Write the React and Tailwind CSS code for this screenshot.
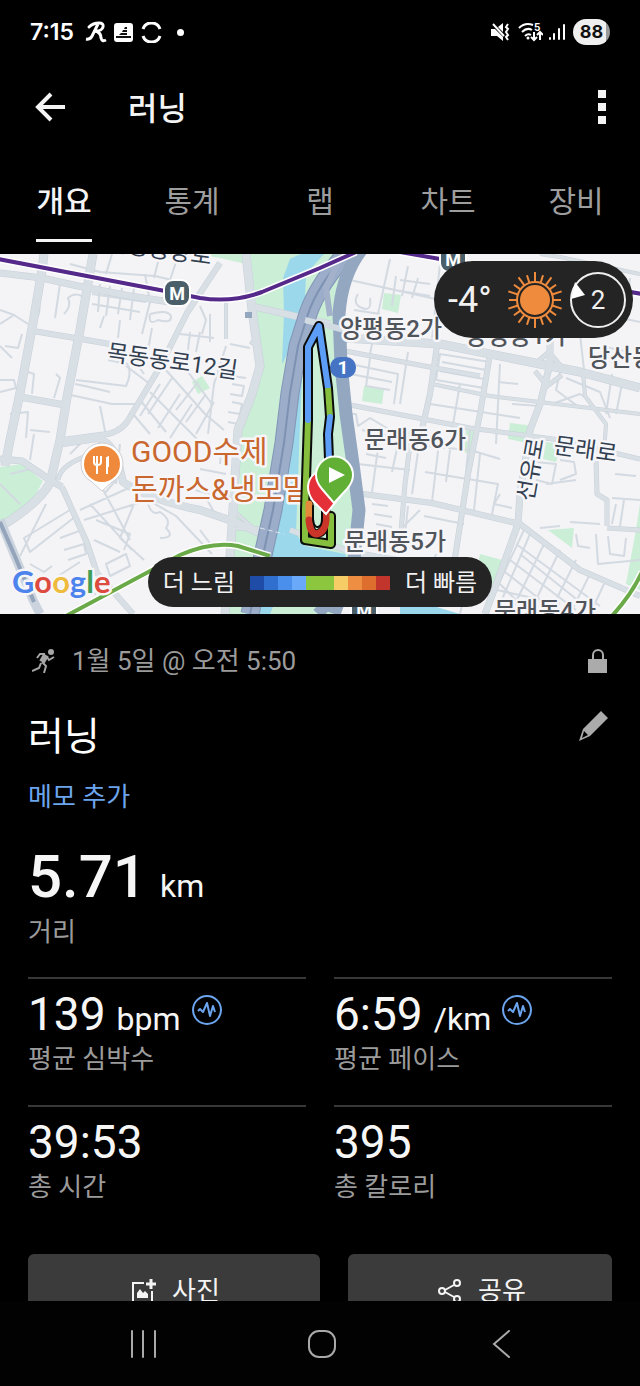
// App.jsx
const TABS = ['개요', '통계', '랩', '차트', '장비'];

const STATS = [
  { value: '139', unit: 'bpm', label: '평균 심박수', zone: true },
  { value: '6:59', unit: '/km', label: '평균 페이스', zone: true },
  { value: '39:53', label: '총 시간' },
  { value: '395', label: '총 칼로리' },
];

const PACE_COLORS = [
  'bg-[#1f4ca6]', 'bg-[#316fce]', 'bg-[#4b8fec]', 'bg-[#6aa9fa]', 'bg-[#8cc63f]',
  'bg-[#8cc63f]', 'bg-[#f5cc65]', 'bg-[#ee8e42]', 'bg-[#dd6e2d]', 'bg-[#c1352d]',
];

// [path, width]
const MAIN_ROADS = [
  ['M44 0L42 16L33 69L20 139L10 186L5 212', 9],
  ['M93 0L80 76L67 143L60 186L50 229Q38 250 0 273', 9],
  ['M220 9L187 59L160 113L127 168Q118 180 100 181L63 186', 6],
  ['M0 19L42 24L78 32L130 42L170 48', 7],
  ['M33 77L75 84L110 90', 6],
  ['M20 143L65 151', 7],
  ['M0 205L22 207L50 226L62 233', 7],
  ['M246 0L252 56L260 112L252 140L238 176L233 256L230 303L225 360', 9],
  ['M63 189L97 184Q112 188 118 208L123 228Q150 246 200 256L235 268L264 281', 8],
  ['M62 233L87 289L97 319L110 334L133 360', 6],
  ['M58 226Q60 212 84 203', 5],
  ['M255 53L330 70', 7],
  ['M250 88L254 90M226 85L226 46', 4],
  ['M290 276L350 298L480 320', 6],
  ['M345 84L440 90L520 106L580 118L640 134', 9],
  ['M345 97L435 114L480 122', 5],
  ['M437 92L430 140L420 184', 6],
  ['M350 151L470 174L560 186L640 205', 5],
  ['M355 239L432 249L520 270L580 316L640 342', 6],
  ['M490 100L480 160L468 220L454 310', 6],
  ['M550 70L550 110L540 150L530 176L520 240L518 270L500 320L485 360', 7],
  ['M535 110L549 98L564 116M535 117L547 132L562 121', 5],
  ['M412 175L405 230L400 290', 5],
  ['M583 118L585 142L606 170L604 198', 4],
  ['M596 205L597 240L607 246L607 272M607 274L640 276', 5],
  ['M432 130L490 142L640 160', 4],
  ['M540 0L560 3L640 20', 4],
  ['M233 256L260 280M230 275L262 274', 4],
];

const MINOR_ROADS = [
  'M0 56L14 61L0 70M14 61L28 70M0 126L14 126L16 134L0 138M5 92L18 94L22 80M0 92L12 104',
  'M70 10L100 18L155 22L180 28M64 60Q72 52 68 44Q74 38 82 42M100 30L98 58M110 32L106 62M122 34L118 60M134 34L130 66M92 40L146 48M92 50L140 58M145 20L150 48L142 80',
  'M150 60Q148 72 158 66Q172 70 171 62Q168 55 150 60M152 74L148 96M120 66L118 84M104 62L100 74',
  'M75 130L85 132L110 138M76 126L126 132Q132 120 128 110L108 106M28 118L34 120L32 140M56 120L60 124L54 144M66 140L112 150L136 150M100 152L106 182',
  'M200 52L206 66L202 80M180 80L214 84M190 78L188 96M200 78L196 98M210 60L210 88M226 92L214 130L208 180M230 90L250 94M218 120L246 124',
  'M165 115L205 160L224 176M150 138L198 186M185 114L212 150M160 130L140 162M172 124L148 160M180 140L158 174M192 150L170 184M198 128L176 156M206 140L186 168M214 148L196 180M140 146L166 178M133 160L150 180',
  'M232 130L244 132L242 142L230 140M232 148L242 150L240 160L228 158M228 168L238 170',
  'M126 112L150 130M130 100L144 120M36 66Q42 56 38 46M55 64L60 30',
  'M10 160L28 158L26 184M30 176L50 178M10 220L30 215M160 0L154 24M112 0L106 20M176 8L170 26',
  'M24 284L70 256L76 262L30 298ZM60 284L82 276M64 296L84 290L86 300L68 306M80 256L142 228M84 266L148 246L176 262L212 300M100 230L130 286M116 226L104 240M90 250L132 296M124 296L130 280L96 266M94 286L120 298M134 250L120 284L144 306M148 250Q152 262 160 258Q172 266 166 274Q176 284 160 284',
  'M106 310L126 300L130 312L110 322ZM30 310L44 318L52 312M52 326L80 308M60 334L96 340M0 230L20 250M46 250L20 302M30 206L34 180M70 200L90 180M120 190L116 230M186 300L212 292L200 276',
  'M200 215L226 220M180 232L210 240M206 244L214 258M222 190L220 210',
  'M350 26L440 46M390 5L378 60L370 100M440 10L432 84M344 60L346 90M408 12L402 42M396 22L392 52M418 24L412 44M400 26L430 30M395 36L430 42M358 40Q352 50 362 54Q372 58 370 44M354 56L380 60',
  'M440 100L490 108L484 134L436 126ZM442 108L486 116M440 117L484 125M370 104L366 132L390 136M350 110L398 120L394 150M408 98L400 150',
  'M340 118L392 128M346 160L356 160L358 172L370 164L390 176M430 150L520 164M460 130L452 176M500 110L496 190M498 128L518 130M512 150L540 152M552 150L580 140L590 146M560 118L556 136L580 154M566 124L600 138L610 164',
  'M362 176L420 188M358 210L410 216M380 180L372 238M398 190L392 218M366 200L386 204M420 184L412 240M440 180L432 248M425 192L470 196L500 205M470 176L462 262M425 218L498 230L492 260M450 196L446 228M480 200L474 256',
  'M372 250L388 252M374 260L392 263M376 270L392 273M408 252L404 290M420 256L400 276M440 254Q446 246 452 256M424 262L464 270M500 240L494 250L512 254',
  'M516 290L600 352M510 306L576 356M530 280L500 350M545 288L512 356M560 296L530 358M576 306L550 358M590 320L570 360M604 330L590 360M524 276L494 340M500 330L530 360M505 318L556 358M520 300L590 356',
  'M536 208L556 210L552 230L536 226M560 206L574 208L576 220L560 226M546 230L576 226M612 244L640 246M616 250L612 270M624 246L620 272M596 280L598 310L640 306M608 282L610 300L624 302L626 284M576 280L578 292L590 294M540 274L560 272M570 268L600 270M615 220L636 222',
  'M602 60L640 68M580 80L584 116M612 120L606 160M622 130L616 160M630 24L626 60M470 330L560 350M436 300L430 320M470 318L460 360M382 320L370 360M330 330L400 350M640 100L600 92',
];

const HALO = {
  stroke: '#f6f5f8',
  strokeWidth: 5,
  strokeLinejoin: 'round',
  paintOrder: 'stroke',
};

function MetroBadge({ x, y }) {
  return (
    <g transform={`translate(${x} ${y})`}>
      <rect x="-13" y="-13" width="26" height="26" rx="9" fill="#4b5f6b" stroke="#fff" strokeWidth="2" />
      <text y="7" textAnchor="middle" fill="#fff" className="text-[18px] font-bold">M</text>
    </g>
  );
}

function RouteMap() {
  return (
    <svg
      className="block h-[360px] w-full"
      viewBox="0 0 640 360"
      preserveAspectRatio="xMidYMid slice"
      role="img"
      aria-label="러닝 경로 지도"
    >
      <rect width="640" height="360" fill="#f4f3f6" />

      {/* parks */}
      <g fill="#caeed6">
        <path d="M250 0H352L336 60L345 160L354 240L356 300L340 360H222L232 290L240 240L238 180L256 135L262 110L256 50Z" />
        <path d="M0 213L22 210L43 227L30 251L0 268Z" />
        <path d="M192 128L202 122L210 134L198 140Z" />
        <path d="M384 39L401 41L398 59L382 55Z" />
        <path d="M364 132L384 135L382 150L362 147Z" />
        <path d="M510 169L534 172L532 190L508 185Z" />
        <path d="M546 188L562 190L556 208L543 205Z" />
        <path d="M548 276L574 274L572 294Z" />
        <path d="M466 176L478 178L474 202L464 198Z" />
        <path d="M480 300L502 306L490 340L474 330Z" />
        <path d="M640 250L636 276L626 330L640 336Z" />
        <path d="M196 0H246V10L220 4Z" />
        <path d="M396 176L410 178L406 186L394 184Z" />
      </g>

      {/* river */}
      <g fill="#9bd8ec">
        <path d="M290 5Q300 0 302 0H324L306 20L304 70L282 110L284 60L283 24Z" />
        <path d="M304 80L300 170L296 280L305 292L345 300L350 312H290L270 360H245L270 270L288 180Z" />
        <path d="M400 350L420 348L460 360H400Z" />
      </g>

      <g fill="none" stroke="#d3dae1" strokeWidth="2" strokeLinejoin="round">
        {MINOR_ROADS.map((d) => <path key={d} d={d} />)}
      </g>
      <g fill="none" stroke="#c8d1d9" strokeLinejoin="round">
        {MAIN_ROADS.map(([d, w]) => <path key={d} d={d} strokeWidth={w} />)}
      </g>
      <g fill="none" stroke="#d8dfe5" strokeLinejoin="round">
        {MAIN_ROADS.map(([d, w]) => <path key={d} d={d} strokeWidth={w - 1} />)}
      </g>
      <path d="M0 266L14 300L33 346L40 360" fill="none" stroke="#cbd4de" strokeWidth="9" />
      <path d="M0 268L14 300L34 348" fill="none" stroke="#93a4bb" strokeWidth="4" />
      <rect x="245" y="58" width="7" height="6" fill="#93a7bf" />

      {/* river side expressways */}
      <g fill="none">
        <path d="M350 -5Q318 30 308 60L298 92L290 139L284 189L273 256L250 360" stroke="#8295b5" strokeWidth="19" />
        <path d="M350 -5Q318 30 308 60L298 92L290 139L284 189L273 256L250 360" stroke="#9cadc9" strokeWidth="17" />
        <path d="M350 -5Q318 30 308 60L298 92L290 139L284 189L273 256L250 360" stroke="#7d92b3" strokeWidth="2" />
        <path d="M362 -5Q342 20 339 60L341 110L346 160L353 210L359 256L354 305L334 360" stroke="#94a7c1" strokeWidth="13" strokeLinejoin="round" />
        <path d="M344 -5L326 34L330 62" stroke="#a3b2ca" strokeWidth="6" />
        <path d="M318 360L356 316" stroke="#94a7c1" strokeWidth="12" />
        <path d="M260 274L284 280" stroke="#dfe6ec" strokeWidth="1" strokeDasharray="5 3" />
        <path d="M305 66L345 76" stroke="#d3dbe2" strokeWidth="6" />
      </g>

      {/* subway lines */}
      <g fill="none" stroke="#fff" strokeWidth="7">
        <path d="M-2 5L165 37L200 44Q232 49 262 38L320 14L356 -2" />
        <path d="M400 -2L440 5L642 40" />
        <path d="M66 362L180 301Q212 287 238 292L270 302" />
        <path d="M612 362Q632 340 642 318" />
      </g>
      <g fill="none" strokeWidth="4">
        <path d="M-2 5L165 37L200 44Q232 49 262 38L320 14L356 -2" stroke="#54298a" />
        <path d="M400 -2L440 5L642 40" stroke="#54298a" />
        <path d="M66 362L180 301Q212 287 238 292L270 302" stroke="#6aaa48" />
        <path d="M612 362Q632 340 642 318" stroke="#6aaa48" />
      </g>
      <MetroBadge x={177} y={39} />
      <MetroBadge x={453} y={5} />
      <MetroBadge x={364} y={356} />

      {/* place labels */}
      <g className="text-[24px] font-medium" fill="#50545b" {...HALO}>
        <text x="340" y="83">양평동2가</text>
        <text x="465" y="90">양평동1가</text>
        <text x="588" y="112">당산동</text>
        <text x="364" y="194">문래동6가</text>
        <text x="344" y="296">문래동5가</text>
        <text x="494" y="365">문래동4가</text>
      </g>
      <g className="text-[23px]" fill="#323f50" {...HALO}>
        <text transform="translate(106 106) rotate(8)">목동동로12길</text>
        <text transform="translate(106 -4) rotate(8)">목동중앙로</text>
        <text transform="translate(553 199) rotate(8)">문래로</text>
        <text transform="translate(533 248) rotate(-80)">선유로</text>
      </g>
      <g className="text-[30px]" fill="#c9672e" {...HALO}>
        <text x="131" y="208">GOOD수제</text>
        <text x="131" y="246" className="text-[29px]">돈까스&amp;냉모밀</text>
      </g>

      {/* restaurant pin */}
      <path d="M102 237L92 228Q81 222 81 210A21 21 0 0 1 123 210Q123 222 112 228Z" fill="#fff" stroke="#cfcfd4" />
      <circle cx="102" cy="210" r="18" fill="#ef8a3c" />
      <path d="M94 202V208Q94 211 97 211Q101 211 101 208V202M97 202V220M107 220V203" stroke="#fff" strokeWidth="2" fill="none" />
      <path d="M106 213V207Q106 202 109 202V213Z" fill="#fff" />

      <rect x="330" y="103" width="26" height="21" rx="10" fill="#4574c4" />
      <text x="343" y="120" textAnchor="middle" fill="#fff" className="text-[19px] font-bold">1</text>

      {/* run route */}
      <g fill="none" strokeLinejoin="round" strokeLinecap="round">
        <path d="M329 205L328 180L330 163L328 134L319 72L308 93L308 166L305 256V286L331 290L331 262" stroke="#0b0b0b" strokeWidth="10" />
        <path d="M309 250V268Q311 280 317 280Q325 278 326 268V250" stroke="#0b0b0b" strokeWidth="9" />
        <path d="M331 262L331 290L305 286V256L308 166" stroke="#86be3d" strokeWidth="6" />
        <path d="M308 166V93L319 72L328 134" stroke="#5b9df7" strokeWidth="6" />
        <path d="M328 134L330 163" stroke="#86be3d" strokeWidth="6" strokeLinecap="butt" />
        <path d="M330 163L328 180L329 205" stroke="#5b9df7" strokeWidth="6" />
        <path d="M309 250V262" stroke="#e58a3a" strokeWidth="7" />
        <path d="M309 266Q310 280 317 280Q325 278 326 266V250" stroke="#cb3429" strokeWidth="7" />
        <path d="M313 252V265Q314 274 318 273Q322 272 322 265V252" fill="#caeed6" stroke="#0b0b0b" strokeWidth="2" />
      </g>
      <path d="M326 260L313 247Q308 240 308 233A18 18 0 0 1 330 216L342 240Z" fill="#e5303a" stroke="#fff" strokeWidth="2" />
      <path d="M334 249L322 235Q316 228 316 221A18.5 18.5 0 0 1 353 221Q353 228 347 235Z" fill="#61af34" stroke="#fff" strokeWidth="2" />
      <path d="M329 213L345 221L329 229Z" fill="#fff" />

      <text x="12" y="339" className="font-['Lato'] text-[31px] font-bold" {...HALO}>
        <tspan fill="#4c83ec">G</tspan>
        <tspan fill="#dd4b3e">o</tspan>
        <tspan fill="#eebb3c">o</tspan>
        <tspan fill="#4c83ec">g</tspan>
        <tspan fill="#3f9f58">l</tspan>
        <tspan fill="#dd4b3e">e</tspan>
      </text>
    </svg>
  );
}

function Sun() {
  const rays = Array.from({ length: 20 }, (_, i) => i * 18);
  return (
    <svg className="size-14" viewBox="-28 -28 56 56" aria-hidden="true">
      <circle r="15" fill="#ef8b3d" />
      <circle r="18" fill="none" stroke="#ef8b3d" strokeWidth="2" />
      {rays.map((a, i) => (
        <path key={a} d={i % 2 ? 'M0 -18V-26' : 'M0 -18V-28'} stroke="#ef8b3d" strokeWidth="2" transform={`rotate(${a})`} />
      ))}
    </svg>
  );
}

function WeatherPill() {
  return (
    <div className="absolute right-[7px] top-[7px] flex h-[77px] w-[199px] items-center rounded-full bg-[#242424] pl-[14px] text-[#f1f1f1]">
      <span className="w-[59px] text-[36px] leading-10">-4°</span>
      <Sun />
      <div className="relative ml-[7px] flex size-[56px] items-center justify-center">
        <svg className="absolute inset-0 size-full" viewBox="-28 -28 56 56" aria-hidden="true">
          <circle r="27" fill="none" stroke="#efefef" strokeWidth="2" />
          <path d="M-23 -18L-13 -5L-27 -1Z" fill="#fff" />
        </svg>
        <span className="text-[26px] leading-8">2</span>
      </div>
    </div>
  );
}

function PaceLegend() {
  return (
    <div className="absolute bottom-[7px] left-1/2 flex h-[50px] w-[344px] -translate-x-1/2 items-center justify-center gap-[15px] rounded-full bg-[#242424] pt-0.5 text-[24px] leading-8 text-[#f1f1f1]">
      <span>더 느림</span>
      <div className="flex h-[14px]">
        {PACE_COLORS.map((color, i) => <span key={i} className={`w-[14px] ${color}`} />)}
      </div>
      <span>더 빠름</span>
    </div>
  );
}

function StatusBar() {
  return (
    <div className="flex h-16 shrink-0 items-center pl-[30px] pr-[30px] font-['Inter'] text-white">
      <span className="text-[23px] font-semibold leading-7">7:15</span>
      <svg className="ml-[11px] h-[22px] w-[24px]" viewBox="0 0 24 22" fill="none" stroke="#fff" strokeWidth="3" aria-hidden="true">
        <path d="M4 6Q8 2 14 2Q19 2 18 6Q17 10 11 10" strokeLinecap="round" />
        <path d="M13 3L8 13Q6 19 1 18M11 10Q16 12 16 17Q17 21 21 19" />
      </svg>
      <svg className="ml-[5px] size-[19px]" viewBox="0 0 19 19" aria-hidden="true">
        <rect width="19" height="19" rx="3" fill="#fff" />
        <path d="M11 4L13 4V6H10ZM9 7H13V9H8ZM7 10H13V12H5ZM2 13H17V15H2Z" fill="#111" />
      </svg>
      <svg className="ml-[8px] size-[21px]" viewBox="0 0 21 21" fill="none" stroke="#fff" strokeWidth="3" aria-hidden="true">
        <path d="M2 7A9 9 0 0 1 19 7M2 14A9 9 0 0 0 19 14" />
      </svg>
      <span className="ml-[15px] size-[7px] rounded-full bg-white" />

      <svg className="ml-auto h-[19px] w-[19px]" viewBox="0 0 19 19" fill="none" stroke="#fff" aria-hidden="true">
        <path d="M0 6H4L12 14V18L6 13H0ZM7 4L12 0V9Z" fill="#fff" stroke="none" />
        <path d="M2 1L13 13" strokeWidth="2" />
        <path d="M17 1L15 4L17 6L15 9L17 12L15 14L17 17" strokeWidth="2" />
      </svg>
      <svg className="ml-[8px] h-[20px] w-[25px]" viewBox="0 0 25 20" fill="none" stroke="#fff" strokeWidth="2" aria-hidden="true">
        <path d="M1 6Q7 0 15 3M4 10Q9 5 14 8M7 14Q10 11 13 13" />
        <circle cx="10" cy="16" r="1.5" fill="#fff" stroke="none" />
        <path d="M16 10V18M13 15L16 18L19 15M22 18V11M19 13L22 10L25 13" />
        <text x="16" y="9" fill="#fff" stroke="none" className="text-[10px] font-bold">5</text>
      </svg>
      <svg className="ml-[5px] h-[18px] w-[17px]" viewBox="0 0 17 18" stroke="#fff" strokeWidth="2" strokeLinecap="round" aria-hidden="true">
        <path d="M2 15V16M6 11V16M11 6V16M16 2V16" />
      </svg>
      <span className="ml-[8px] flex h-[26px] w-[37px] items-center justify-center rounded-full bg-linear-to-r from-[#efefef] from-88% to-[#999] to-88% text-[18px] font-bold leading-6 text-[#111]">
        88
      </span>
    </div>
  );
}

function ZoneIcon() {
  return (
    <svg className="size-[30px]" viewBox="0 0 30 30" fill="none" stroke="#6ca5ee" strokeWidth="2" aria-hidden="true">
      <circle cx="15" cy="15" r="14" />
      <path d="M6 16L8 14L11 17L15 8L18 21L21 11L23 17" strokeLinejoin="round" />
    </svg>
  );
}

function Stat({ value, unit, label, zone }) {
  return (
    <div className="h-32 border-t-2 border-[#383838] pt-[7px]">
      <dd className="flex items-baseline gap-[11px] text-[#f6f6f6]">
        <span className="text-[46px] leading-[56px]">{value}</span>
        {unit && <span className="text-[32px] leading-8">{unit}</span>}
        {zone && <button type="button" aria-label="구간 보기" className="mt-[9px] self-start"><ZoneIcon /></button>}
      </dd>
      <dt className="pt-px text-[26px] leading-8 text-[#9b9b9b]">{label}</dt>
    </div>
  );
}

export default function App() {
  return (
    <div className="flex h-screen flex-col overflow-hidden bg-black font-['Roboto','Noto_Sans_CJK_KR',sans-serif] text-white">
      <StatusBar />

      <header className="flex h-[86px] shrink-0 items-center px-[34px]">
        <button type="button" aria-label="뒤로">
          <svg className="size-8" viewBox="0 0 32 32" fill="none" stroke="#f4f4f4" strokeWidth="4" aria-hidden="true">
            <path d="M17 3L4 16L17 29M4 16H31" />
          </svg>
        </button>
        <h1 className="ml-[62px] pt-1 text-[32px] font-medium leading-10 text-[#f4f4f4]">러닝</h1>
        <button type="button" aria-label="더보기" className="ml-auto flex flex-col gap-[5px]">
          <span className="size-2 bg-[#f4f4f4]" />
          <span className="size-2 bg-[#f4f4f4]" />
          <span className="size-2 bg-[#f4f4f4]" />
        </button>
      </header>

      <nav className="grid h-[104px] shrink-0 grid-cols-5 pt-[30px] text-[30px] leading-[44px]">
        {TABS.map((tab, i) => (
          <a
            key={tab}
            href="#"
            className={
              i === 0
                ? 'h-[62px] justify-self-center border-b-3 border-[#f4f4f4] font-medium text-[#f4f4f4]'
                : 'h-[62px] justify-self-center text-[#9d9d9d]'
            }
          >
            {tab}
          </a>
        ))}
      </nav>

      <main className="min-h-0 flex-1 overflow-hidden">
        <section className="relative">
          <RouteMap />
          <WeatherPill />
          <PaceLegend />
        </section>

        <section className="px-7 pt-[28px]">
          <div className="flex h-[38px] items-center text-[26px] leading-8 text-[#9b9b9b]">
            <svg className="ml-1 size-6" viewBox="0 0 24 24" fill="none" stroke="#a5a5a5" aria-hidden="true">
              <circle cx="19" cy="3" r="3" fill="#a5a5a5" stroke="none" />
              <path d="M14 6L10 13" strokeWidth="6" />
              <path d="M13 5L8 5L5 9M15 8L17 11L22 8" strokeWidth="2" />
              <path d="M9 14L7 19L0 22M10 13L14 17L12 24" strokeWidth="2" />
            </svg>
            <span className="ml-4">1월 5일 @ 오전 5:50</span>
            <svg className="ml-auto mr-1 h-6 w-5" viewBox="0 0 20 24" aria-hidden="true">
              <path d="M5 11V6A5 5 0 0 1 15 6V11" fill="none" stroke="#ababab" strokeWidth="2" />
              <rect x="0" y="10" width="19" height="14" fill="#ababab" />
            </svg>
          </div>

          <div className="mt-[31px] flex items-start justify-between">
            <h2 className="pt-0.5 text-[39px] leading-[48px]">러닝</h2>
            <button type="button" aria-label="제목 편집" className="mr-[3px]">
              <svg className="size-[30px]" viewBox="0 0 30 30" aria-hidden="true">
                <path d="M0 30L4 18L22 0L29 7L11 25ZM3 27L9 24L5 20Z" fill="#ababab" fillRule="evenodd" />
              </svg>
            </button>
          </div>
          <a href="#" className="mt-[18px] block text-[26px] leading-9 text-[#6ca5ee]">메모 추가</a>

          <div className="mt-8 flex items-baseline gap-[13px] text-[#f6f6f6]">
            <span className="text-[60px] font-medium leading-[60px]">5.71</span>
            <span className="text-[32px] leading-8">km</span>
          </div>
          <p className="mt-[9px] text-[26px] leading-8 text-[#9b9b9b]">거리</p>

          <dl className="mt-[29px] grid grid-cols-2 gap-x-7">
            {STATS.map((stat) => <Stat key={stat.label} {...stat} />)}
          </dl>

          <div className="mt-[21px] grid grid-cols-[21fr_19fr] gap-7 text-[26px] leading-8 text-[#f4f4f4]">
            <button type="button" className="flex h-[74px] items-center justify-center gap-4 rounded-md bg-[#3b3b3b] pl-1">
              <svg className="size-6" viewBox="0 0 24 24" fill="none" stroke="#f4f4f4" strokeWidth="2" aria-hidden="true">
                <path d="M12 4H1V23H20V12" />
                <path d="M19 0V10M14 5H24" strokeWidth="3" />
                <path d="M5 19V14L8 10L11 14L13 12L16 15V19Z" fill="#f4f4f4" stroke="none" />
              </svg>
              사진
            </button>
            <button type="button" className="flex h-[74px] items-center justify-center gap-4 rounded-md bg-[#3b3b3b] pl-1">
              <svg className="size-6" viewBox="0 0 24 24" fill="none" stroke="#f4f4f4" strokeWidth="2" aria-hidden="true">
                <circle cx="4" cy="12" r="3" />
                <circle cx="19" cy="4" r="3" />
                <circle cx="19" cy="20" r="3" />
                <path d="M7 11L16 6M7 13L16 18" />
              </svg>
              공유
            </button>
          </div>
        </section>
      </main>

      <footer className="flex h-[85px] shrink-0 items-center justify-center gap-[135px] bg-[#020202] pl-1">
        <button type="button" aria-label="최근 앱" className="flex w-11 justify-center">
          <svg className="size-7" viewBox="0 0 28 28" stroke="#a9a9a9" strokeWidth="2" strokeLinecap="round" aria-hidden="true">
            <path d="M3 1V27M14 1V27M26 1V27" />
          </svg>
        </button>
        <button type="button" aria-label="홈" className="flex w-11 justify-center">
          <svg className="size-[30px]" viewBox="0 0 30 30" fill="none" stroke="#a9a9a9" strokeWidth="2" aria-hidden="true">
            <rect x="2" y="2" width="26" height="26" rx="10" />
          </svg>
        </button>
        <button type="button" aria-label="이전" className="flex w-11 justify-center">
          <svg className="size-7" viewBox="0 0 28 28" fill="none" stroke="#a9a9a9" strokeWidth="2" strokeLinecap="round" aria-hidden="true">
            <path d="M22 1L7 14L22 27" />
          </svg>
        </button>
      </footer>
    </div>
  );
}
